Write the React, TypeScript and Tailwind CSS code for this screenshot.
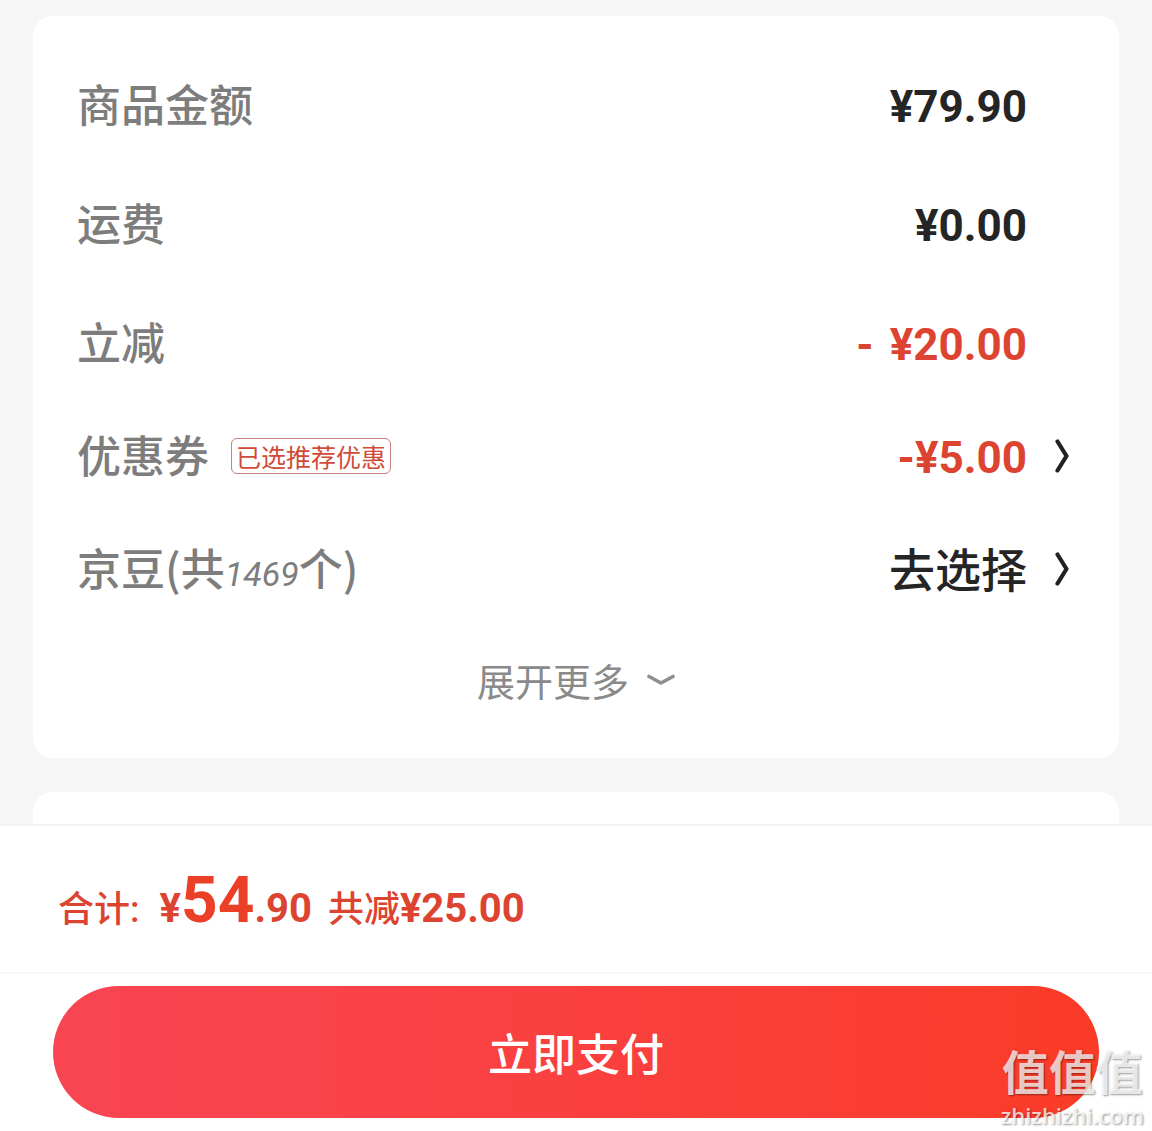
import React, { useState } from 'react';

interface PriceRow {
  label: string;
  value: string;
  discount?: boolean;
}

const PRICE_ROWS: PriceRow[] = [
  { label: '商品金额', value: '¥79.90' },
  { label: '运费', value: '¥0.00' },
  { label: '立减', value: '¥20.00', discount: true },
];

const ChevronRight: React.FC = () => (
  <svg viewBox="0 0 14 34" className="h-[34px] w-[14px]" fill="none" aria-hidden="true">
    <path d="M2.5 2.5 L11.5 17 L2.5 31.5" stroke="#222" strokeWidth="4.2" strokeLinecap="round" strokeLinejoin="round" />
  </svg>
);

const ChevronDown: React.FC = () => (
  <svg viewBox="0 0 28 12" className="h-3 w-7" fill="none" aria-hidden="true">
    <path d="M2 2.5 L14 9 L26 2.5" stroke="#8f8f8f" strokeWidth="3.6" strokeLinecap="round" strokeLinejoin="round" />
  </svg>
);

const App: React.FC = () => {
  const [expanded, setExpanded] = useState(false);

  return (
    <div className="relative bg-white font-['Noto_Sans_CJK_SC',sans-serif]">
      <main className="bg-[#f6f6f6] px-[33px] pt-4">
        {/* Order amounts */}
        <section className="rounded-[20px] bg-white px-11 pt-[59px] pb-[42px]">
          <dl className="flex flex-col gap-[55px]">
            {PRICE_ROWS.map((row) => (
              <div key={row.label} className="flex h-16 items-center justify-between pr-12">
                <dt className="pb-2 text-[44px] leading-[56px] font-medium text-[#7d7d7d]">{row.label}</dt>
                <dd
                  className={`flex gap-4 font-['Roboto',sans-serif] text-[44px] leading-[64px] font-bold ${
                    row.discount ? 'text-[#dc4431]' : 'text-[#252525]'
                  }`}
                >
                  {row.discount && <span>-</span>}
                  <span>{row.value}</span>
                </dd>
              </div>
            ))}
          </dl>

          <div className="mt-[49px] flex flex-col gap-[49px]">
            <button type="button" className="flex h-16 w-full items-center text-left">
              <span className="pb-2 text-[44px] leading-[56px] font-medium text-[#7d7d7d]">优惠券</span>
              <span className="mb-1 ml-[22px] rounded-md border border-[#c98079] px-1 text-[25px] leading-[34px] text-[#d04a38]">
                已选推荐优惠
              </span>
              <span className="ml-auto font-['Roboto',sans-serif] text-[44px] leading-[64px] font-bold text-[#dc4431]">
                -¥5.00
              </span>
              <span className="flex w-12 justify-end pr-1.5 pb-1">
                <ChevronRight />
              </span>
            </button>

            <button type="button" className="flex h-16 w-full items-center text-left">
              <span className="pb-2 text-[44px] leading-[56px] font-medium text-[#7d7d7d]">
                京豆(共
                <span className="font-['Roboto',sans-serif] text-[34px] leading-none font-normal italic">1469</span>
                个)
              </span>
              <span className="ml-auto pb-2 text-[46px] leading-[56px] font-medium text-[#252525]">去选择</span>
              <span className="flex w-12 justify-end pr-1.5 pb-1">
                <ChevronRight />
              </span>
            </button>

            <button
              type="button"
              aria-expanded={expanded}
              onClick={() => setExpanded(!expanded)}
              className="flex h-16 items-center justify-center gap-[18px] pb-2 text-[38px] leading-[56px] text-[#8a8a8a]"
            >
              展开更多
              <ChevronDown />
            </button>
          </div>
        </section>

        <section className="mt-[34px] h-8 rounded-t-[20px] bg-white" />
      </main>

      <footer className="border-t-2 border-[#f4f4f4]">
        {/* Total */}
        <div className="flex h-[146px] items-center px-[58px] pt-3">
          <p className="flex items-baseline font-['Roboto','Noto_Sans_CJK_SC',sans-serif] text-[40px] leading-[64px] font-bold text-[#dc4431]">
            <span className="mr-5 text-[36px] font-medium">合计:</span>
            <span>¥</span>
            <span className="text-[64px] text-[#ec3f28]">54</span>
            <span>.90</span>
            <span className="ml-4 text-[36px] font-medium">共减</span>
            <span>¥25.00</span>
          </p>
        </div>

        <div className="border-t-2 border-[#f7f7f7] px-[53px] pt-3 pb-[13px]">
          <button
            type="button"
            className="h-[132px] w-full rounded-full bg-linear-to-r from-[#f94553] to-[#fa3b26] text-[44px] leading-[56px] font-medium text-white"
          >
            立即支付
          </button>
        </div>
      </footer>

      {/* Site watermark */}
      <div className="pointer-events-none absolute right-2 bottom-1 flex flex-col items-center gap-2 text-white/75 [text-shadow:1px_1px_2px_rgba(0,0,0,0.4)]">
        <span className="text-[47px] leading-[50px] font-bold">值值值</span>
        <span className="font-['Open_Sans',sans-serif] text-[22px] leading-6 font-semibold">zhizhizhi.com</span>
      </div>
    </div>
  );
};

export default App;
